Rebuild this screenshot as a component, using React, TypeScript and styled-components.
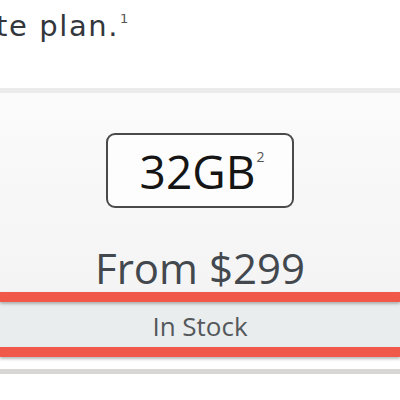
import styled, { createGlobalStyle } from 'styled-components';

const GlobalStyle = createGlobalStyle`
  html, body {
    margin: 0;
    padding: 0;
    background: #ffffff;
    overflow: hidden;
  }
`;

const Page = styled.div`
  width: 400px;
  height: 400px;
  display: flex;
  flex-direction: column;
  font-family: "DejaVu Sans", "Liberation Sans", sans-serif;
`;

const Intro = styled.p`
  margin: 0;
  height: 88px;
  padding: 10px 0 0 0;
  box-sizing: border-box;
  margin-left: -4px;
  font-size: 29px;
  line-height: 32px;
  letter-spacing: 1.6px;
  color: #33373c;
  white-space: nowrap;
`;

const Note = styled.span`
  font-size: 13px;
  position: relative;
  top: -13px;
  margin-left: 1px;
  letter-spacing: 0;
  color: #555;
`;

const Panel = styled.div`
  border-top: 5px solid #ebebeb;
  background: linear-gradient(#fbfbfb, #f4f4f4);
  display: flex;
  flex-direction: column;
  align-items: center;
`;

const Capacity = styled.div`
  margin-top: 40px;
  width: 188px;
  height: 75px;
  box-sizing: border-box;
  border: 2px solid #4a4a4a;
  border-radius: 9px;
  background: #fdfdfd;
  display: flex;
  align-items: center;
  justify-content: center;
  font-family: "Open Sans", "DejaVu Sans", sans-serif;
  font-size: 46px;
  color: #151515;
  padding-left: 4px;
`;

const CapacityNote = styled.span`
  font-size: 14px;
  position: relative;
  top: -14px;
  margin-left: 1px;
  color: #555;
`;

const Price = styled.div`
  margin-top: 36px;
  height: 48px;
  font-family: "Open Sans", "DejaVu Sans", sans-serif;
  font-size: 42px;
  line-height: 48px;
  color: #43484e;
`;

const RedRule = styled.div`
  height: 10px;
  background: #f0584a;
  box-shadow: 0 2px 3px rgba(120, 120, 120, 0.5);
  position: relative;
  z-index: 1;
`;

const StockRow = styled.div`
  height: 45px;
  background: #eaedee;
  display: flex;
  align-items: center;
  justify-content: center;
  font-family: "Open Sans", "DejaVu Sans", sans-serif;
  font-size: 26px;
  padding-top: 2px;
  box-sizing: border-box;
  color: #54585b;
`;

const BottomEdge = styled.div`
  margin-top: 12px;
  height: 5px;
  background: #d9d6d6;
`;

export default function App() {
  return (
    <>
      <GlobalStyle />
      <Page>
        <Intro>
          te plan.<Note>1</Note>
        </Intro>
        <Panel>
          <Capacity>
            32GB<CapacityNote>2</CapacityNote>
          </Capacity>
          <Price>From $299</Price>
        </Panel>
        <RedRule />
        <StockRow>In Stock</StockRow>
        <RedRule />
        <BottomEdge />
      </Page>
    </>
  );
}
